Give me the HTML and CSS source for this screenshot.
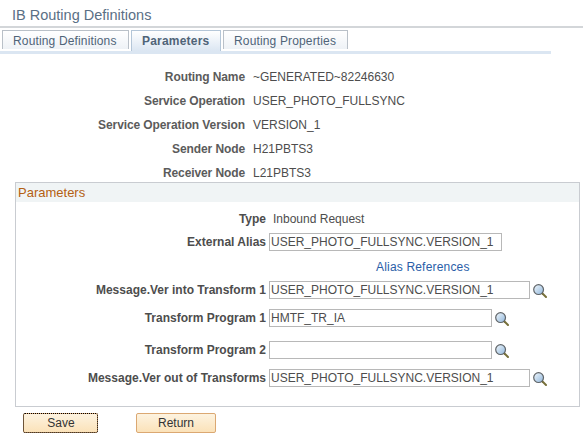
FILE: index.html
```html
<!DOCTYPE html>
<html lang="en">
<head>
<meta charset="utf-8">
<title>IB Routing Definitions</title>
<link rel="stylesheet" href="styles.css">
</head>
<body>
<svg class="defs" width="0" height="0" aria-hidden="true">
  <defs>
    <linearGradient id="lens" x1="0" y1="0" x2="1" y2="1">
      <stop offset="0" stop-color="#f2f8fc"/>
      <stop offset="1" stop-color="#8fb6dc"/>
    </linearGradient>
    <symbol id="look" viewBox="0 0 14 14">
      <line x1="9.5" y1="9.5" x2="13" y2="13" stroke="#77703a" stroke-width="2" stroke-linecap="round"/>
      <circle cx="5.6" cy="5.6" r="4.9" fill="url(#lens)" stroke="#5f6468" stroke-width="1.2"/>
    </symbol>
  </defs>
</svg>
<h1 class="title">IB Routing Definitions</h1>
<nav class="tabs">
  <a class="tab tab-a">Routing Definitions</a>
  <a class="tab tab-b active">Parameters</a>
  <a class="tab tab-c">Routing Properties</a>
</nav>
<dl class="summary">
  <dt>Routing Name</dt><dd>~GENERATED~82246630</dd>
  <dt>Service Operation</dt><dd>USER_PHOTO_FULLSYNC</dd>
  <dt>Service Operation Version</dt><dd>VERSION_1</dd>
  <dt>Sender Node</dt><dd>H21PBTS3</dd>
  <dt>Receiver Node</dt><dd>L21PBTS3</dd>
</dl>
<section class="panel">
  <h2 class="panel-head">Parameters</h2>
  <div class="type-row"><span class="label">Type</span><span class="type-value">Inbound Request</span></div>
  <div class="row row-alias"><label class="label">External Alias</label><input class="field wide" value="USER_PHOTO_FULLSYNC.VERSION_1"></div>
  <div class="link-row"><a class="link">Alias References</a></div>
  <div class="row row-m1"><label class="label">Message.Ver into Transform 1</label><input class="field long" value="USER_PHOTO_FULLSYNC.VERSION_1"><svg class="icon"><use href="#look"/></svg></div>
  <div class="row row-t1"><label class="label">Transform Program 1</label><input class="field mid" value="HMTF_TR_IA"><svg class="icon"><use href="#look"/></svg></div>
  <div class="row row-t2"><label class="label">Transform Program 2</label><input class="field mid" value=""><svg class="icon"><use href="#look"/></svg></div>
  <div class="row row-m2"><label class="label">Message.Ver out of Transforms</label><input class="field long" value="USER_PHOTO_FULLSYNC.VERSION_1"><svg class="icon"><use href="#look"/></svg></div>
</section>
<div class="actions">
  <button class="btn save" type="button">Save</button>
  <button class="btn return" type="button">Return</button>
</div>
</body>
</html>
```
FILE: styles.css
```css
* { box-sizing: border-box; }
html, body { margin: 0; padding: 0; background: #fff; }
body {
  width: 583px;
  height: 437px;
  overflow: hidden;
  font-family: "Liberation Sans", Arial, sans-serif;
  font-size: 12px;
  color: #4d4d4d;
}
.defs { display: block; height: 0; }
.title {
  margin: 0;
  height: 28px;
  padding: 6px 0 0 12px;
  font-size: 14.5px;
  line-height: 18px;
  font-weight: 400;
  color: #5a6f85;
  border-bottom: 2px solid #d3d6d9;
}
.tabs {
  display: flex;
  width: 551px;
  height: 24px;
  margin-top: 2px;
  padding-left: 2px;
  gap: 2px;
  border-bottom: 3px solid #dbe6f2;
}
.tab {
  height: 19px;
  padding: 0 0 0 10px;
  font-size: 12px;
  line-height: 20px;
  letter-spacing: 0.15px;
  color: #4f6478;
  background: linear-gradient(#fff, #eef2f6);
  border: 1px solid #b9c0c8;
  border-bottom: 0;
}
.tab-a { width: 127px; }
.tab-b { width: 90px; }
.tab-c { width: 125px; }
.tab.active {
  font-weight: 700;
  height: 21px;
  letter-spacing: 0.2px;
  background: linear-gradient(#fff, #dbe6f2);
  border-color: #b4c6d8;
}
.summary {
  display: grid;
  grid-template-columns: 245px 1fr;
  column-gap: 8px;
  grid-auto-rows: 24px;
  margin: 11px 0 0;
  align-items: center;
}
.summary dt {
  text-align: right;
  font-weight: 700;
  letter-spacing: -0.1px;
  color: #5b5b5b;
}
.summary dd { margin: 0; color: #4d4d4d; }
.panel {
  width: 565px;
  height: 225px;
  margin: -3px 0 0 15px;
  border: 1px solid #c9ccd1;
}
.panel-head {
  margin: 0;
  height: 19px;
  padding-left: 2px;
  font-size: 13px;
  line-height: 20px;
  font-weight: 400;
  color: #b45f12;
  background: #f0f4f5;
}
.label {
  width: 250px;
  flex: none;
  text-align: right;
  font-weight: 700;
  color: #4d4d4d;
}
.type-row {
  display: flex;
  align-items: center;
  height: 18px;
  margin-top: 8px;
  gap: 7px;
}
.row {
  display: flex;
  align-items: center;
  height: 18px;
  gap: 3px;
}
.row-alias { margin-top: 5px; }
.link-row {
  height: 16px;
  margin-top: 8px;
  padding-left: 360px;
  line-height: 16px;
}
.link { color: #2a5ea8; letter-spacing: 0.18px; }
.row-m1 { margin-top: 6px; }
.row-t1 { margin-top: 10px; }
.row-t2 { margin-top: 14px; }
.row-m2 { margin-top: 10px; }
.field {
  height: 18px;
  padding: 0 1px;
  margin: 0;
  border: 1px solid #b8b8b8;
  border-radius: 0;
  background: #fff;
  font-family: "Liberation Sans", Arial, sans-serif;
  font-size: 12px;
  color: #4d4d4d;
  outline: 0;
}
.wide { width: 233px; }
.long { width: 261px; }
.mid { width: 223px; }
.icon { width: 14px; height: 14px; flex: none; margin-top: 2px; }
.actions {
  display: flex;
  margin: 6px 0 0 23px;
  gap: 38px;
  align-items: flex-start;
}
.btn {
  height: 20px;
  padding: 0;
  font-family: "Liberation Sans", Arial, sans-serif;
  font-size: 12px;
  color: #333;
  background: linear-gradient(#fdf3e0, #fbe2b9);
  border: 1px solid #dba872;
  border-radius: 2px;
}
.save { width: 75px; padding-left: 1px; outline: 1px dotted #000; outline-offset: -1px; }
.return { width: 80px; }
```
